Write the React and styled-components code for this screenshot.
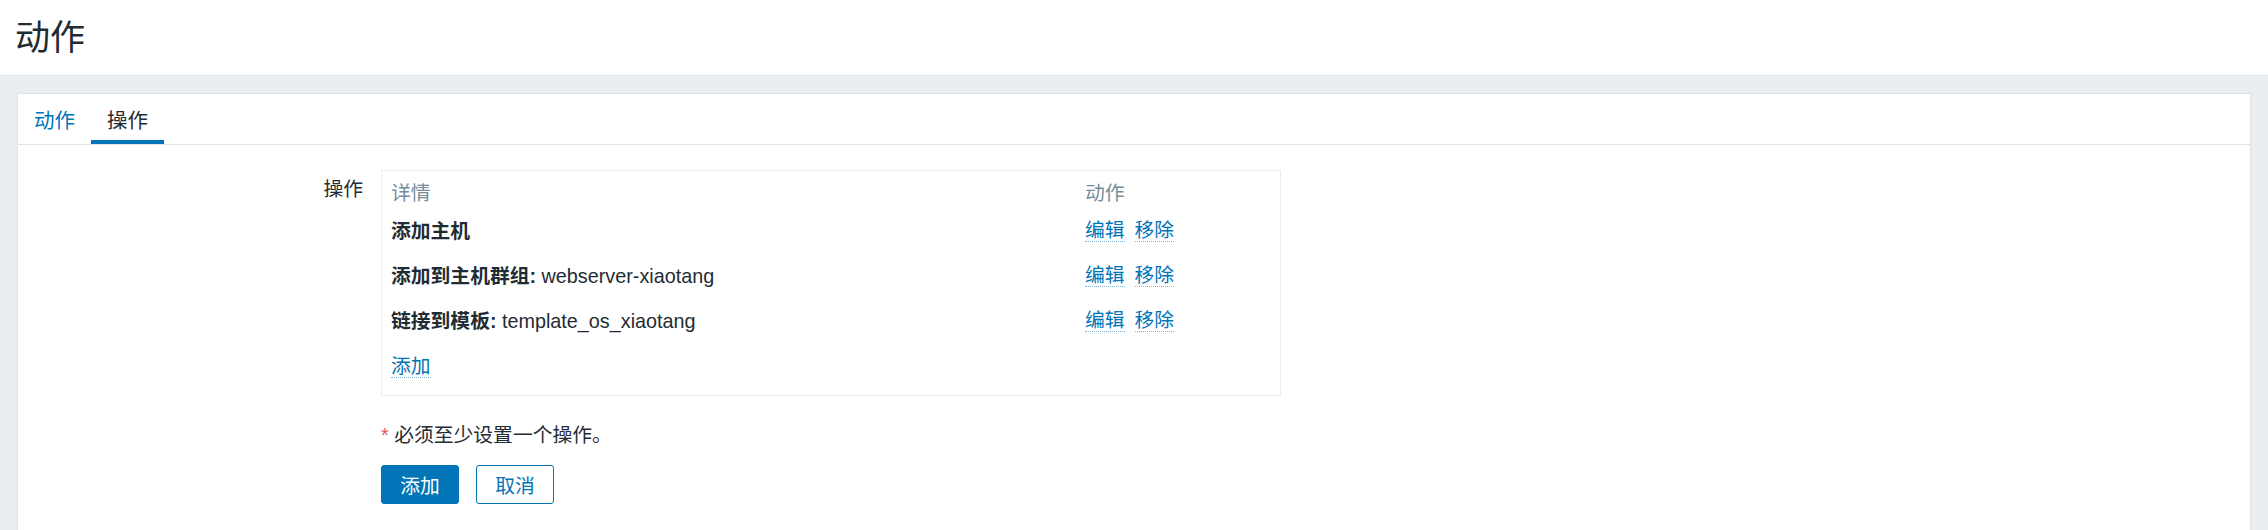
import React from 'react'
import styled, { createGlobalStyle, css } from 'styled-components'

const operations = [
  { label: '添加主机', value: '' },
  { label: '添加到主机群组:', value: 'webserver-xiaotang' },
  { label: '链接到模板:', value: 'template_os_xiaotang' },
]

const App = () => {
  return (
    <>
      <GlobalStyle />
      <Header>
        <Title>动作</Title>
      </Header>
      <Wrapper>
        <Card>
          <Tabs>
            <Tab>动作</Tab>
            <Tab active>操作</Tab>
          </Tabs>
          <Form>
            <Label>操作</Label>
            <Field>
              <OpsBox>
                <OpsTable>
                  <thead>
                    <tr>
                      <HeadCell>详情</HeadCell>
                      <HeadCell>动作</HeadCell>
                    </tr>
                  </thead>
                  <tbody>
                    {operations.map((op) => (
                      <tr key={op.label}>
                        <Cell>
                          <strong>{op.label}</strong>
                          {op.value && ` ${op.value}`}
                        </Cell>
                        <Cell>
                          <Actions>
                            <Link>编辑</Link>
                            <Link>移除</Link>
                          </Actions>
                        </Cell>
                      </tr>
                    ))}
                    <tr>
                      <Cell colSpan={2}>
                        <Link>添加</Link>
                      </Cell>
                    </tr>
                  </tbody>
                </OpsTable>
              </OpsBox>
              <Hint>
                <Asterisk>*</Asterisk> 必须至少设置一个操作。
              </Hint>
              <Buttons>
                <Button primary>添加</Button>
                <Button>取消</Button>
              </Buttons>
            </Field>
          </Form>
        </Card>
      </Wrapper>
    </>
  )
}

export default App

/**
 * Styles
 */

const GlobalStyle = createGlobalStyle`
  html, body {
    margin: 0;
    padding: 0;
    background: #ebeef0;
  }
  body {
    font-family: "Liberation Sans", Arial, "Noto Sans CJK SC", sans-serif;
    font-size: 19.8px;
    color: #1f2c33;
  }
  * {
    box-sizing: border-box;
  }
`

const Header = styled.header`
  height: 76px;
  background: #ffffff;
  border-bottom: 1px solid #dfe4e7;
  display: flex;
  align-items: center;
  padding: 0 15px;
`

const Title = styled.h1`
  margin: 0;
  font-size: 35px;
  font-weight: normal;
  line-height: 40px;
  color: #1f2c33;
`

const Wrapper = styled.main`
  padding: 17px;
`

const Card = styled.section`
  background: #ffffff;
  border: 1px solid #dfe4e7;
  min-height: 520px;
`

const Tabs = styled.nav`
  display: flex;
  height: 51px;
  border-bottom: 1px solid #dfe4e7;
`

const Tab = styled.div`
  display: flex;
  align-items: center;
  padding: 4px 16px 0 16px;
  font-size: 20.5px;
  color: #0275b8;
  border-bottom: 4px solid transparent;

  ${({ active }) =>
    active &&
    css`
      color: #1f2c33;
      border-bottom-color: #0275b8;
    `};
`

const Form = styled.div`
  display: grid;
  grid-template-columns: 345px 1fr;
  column-gap: 18px;
  padding-top: 25px;
`

const Label = styled.div`
  text-align: right;
  line-height: 28px;
  padding-top: 5px;
`

const Field = styled.div`
  display: flex;
  flex-direction: column;
  align-items: flex-start;
`

const OpsBox = styled.div`
  width: 900px;
  border: 1px solid #ebeef0;
  padding: 0 9px 7px;
`

const OpsTable = styled.table`
  width: 100%;
  border-collapse: collapse;

  td:first-child,
  th:first-child {
    width: 694px;
  }
`

const HeadCell = styled.th`
  text-align: left;
  font-weight: normal;
  color: #768d99;
  line-height: 28px;
  padding: 8px 0 1px;
`

const Cell = styled.td`
  line-height: 28px;
  padding: 8.5px 0;
  vertical-align: middle;
  white-space: nowrap;
`

const Actions = styled.div`
  display: flex;
  gap: 10px;
`

const Link = styled.span`
  display: inline-block;
  line-height: 22px;
  color: #0275b8;
  border-bottom: 1px dotted #7fb4d6;
  cursor: pointer;
`

const Hint = styled.div`
  margin-top: 25px;
  line-height: 28px;
`

const Asterisk = styled.span`
  color: #e45959;
`

const Buttons = styled.div`
  display: flex;
  gap: 17px;
  margin-top: 16px;
`

const Button = styled.button`
  width: 78px;
  height: 39px;
  border-radius: 3px;
  font-family: inherit;
  font-size: 19.8px;
  border: 1px solid #0275b8;
  background: #ffffff;
  color: #0275b8;
  padding: 0;

  ${({ primary }) =>
    primary &&
    css`
      background: #0275b8;
      color: #ffffff;
    `};
`
